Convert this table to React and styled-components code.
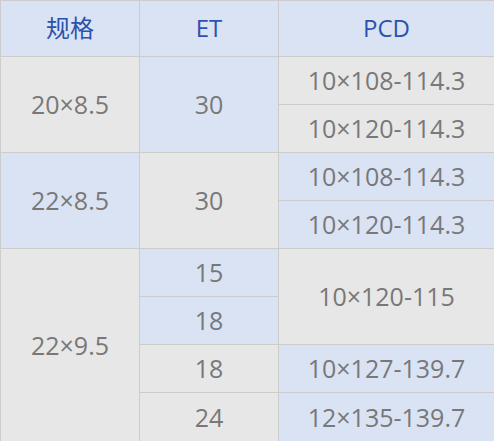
import React from "react";
import styled, { createGlobalStyle } from "styled-components";

const Global = createGlobalStyle`
  html, body { margin: 0; padding: 0; background: #ffffff; }
  body { font-family: "Open Sans", "Noto Sans CJK SC", sans-serif; }
`;

const Table = styled.table`
  border-collapse: collapse;
  table-layout: fixed;
  width: 494px;
  font-family: "Open Sans", "Noto Sans CJK SC", sans-serif;
`;

const Col = styled.col`
  width: ${(p) => p.$w}px;
`;

const Row = styled.tr`
  height: ${(p) => p.$h || 48}px;
`;

const Head = styled.th`
  background: #dae3f4;
  border: 1px solid #cccccc;
  color: #2c52ad;
  font-weight: 400;
  font-size: 24px;
  line-height: 1;
  text-align: center;
  vertical-align: middle;
  padding: 0 0 2px;
  font-family: "Open Sans", "Noto Sans CJK SC", sans-serif;
`;

const Cell = styled.td`
  background: ${(p) => (p.$blue ? "#dae3f4" : "#e7e7e7")};
  border: 1px solid #cccccc;
  color: #787878;
  font-size: 25px;
  line-height: 1;
  text-align: center;
  vertical-align: middle;
  padding: 0;
`;

export default function App() {
  return (
    <>
      <Global />
      <Table>
        <colgroup>
          <Col $w={139} />
          <Col $w={139} />
          <Col $w={216} />
        </colgroup>
        <thead>
          <Row $h={56}>
            <Head>规格</Head>
            <Head>ET</Head>
            <Head>PCD</Head>
          </Row>
        </thead>
        <tbody>
          <Row>
            <Cell rowSpan={2}>20×8.5</Cell>
            <Cell rowSpan={2} $blue>30</Cell>
            <Cell>10×108-114.3</Cell>
          </Row>
          <Row>
            <Cell>10×120-114.3</Cell>
          </Row>
          <Row>
            <Cell rowSpan={2} $blue>22×8.5</Cell>
            <Cell rowSpan={2}>30</Cell>
            <Cell $blue>10×108-114.3</Cell>
          </Row>
          <Row>
            <Cell $blue>10×120-114.3</Cell>
          </Row>
          <Row>
            <Cell rowSpan={4}>22×9.5</Cell>
            <Cell $blue>15</Cell>
            <Cell rowSpan={2}>10×120-115</Cell>
          </Row>
          <Row>
            <Cell $blue>18</Cell>
          </Row>
          <Row>
            <Cell>18</Cell>
            <Cell $blue>10×127-139.7</Cell>
          </Row>
          <Row $h={50}>
            <Cell>24</Cell>
            <Cell $blue>12×135-139.7</Cell>
          </Row>
        </tbody>
      </Table>
    </>
  );
}
